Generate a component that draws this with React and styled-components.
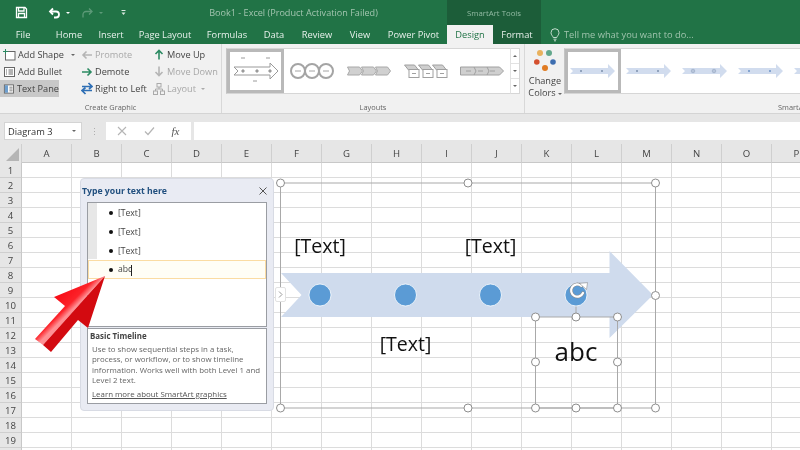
import React from 'react';
import styled, { createGlobalStyle } from 'styled-components';

const GlobalStyle = createGlobalStyle`
  html, body { margin: 0; padding: 0; background: #fff; }
  body { font-family: "Open Sans", "Noto Sans", sans-serif; color: #444; }
`;

const Page = styled.div`
  position: relative;
  width: 800px;
  height: 450px;
  overflow: hidden;
  display: flex;
  flex-direction: column;
  background: #fff;
  filter: blur(0.3px);
`;

const Header = styled.header`
  position: relative;
  height: 44px;
  background: #217346;
  display: flex;
  flex-direction: column;
  flex: none;
`;

const TitleRow = styled.div`
  position: relative;
  height: 25px;
  display: flex;
  align-items: center;
`;

const QuickIcon = styled.span`
  width: ${(p) => p.$w}px;
  height: 25px;
  padding-left: ${(p) => p.$pl || 0}px;
  box-sizing: border-box;
  display: flex;
  align-items: center;
  justify-content: center;
  flex: none;
`;

const BookTitle = styled.div`
  width: 303px;
  flex: none;
  text-align: center;
  font-size: 9.1px;
  color: #a3c5b0;
  white-space: nowrap;
`;

const ToolsTab = styled.div`
  width: 94px;
  height: 25px;
  margin-left: 2px;
  color: #93bba4;
  font-size: 7.8px;
  display: flex;
  align-items: center;
  justify-content: center;
  flex: none;
`;

const ToolsShade = styled.div`
  position: absolute;
  left: 447px;
  top: 0;
  width: 94px;
  height: 44px;
  background: #1c5d39;
`;

const TabRow = styled.nav`
  position: relative;
  height: 19px;
  display: flex;
  align-items: stretch;
`;

const Tab = styled.div`
  width: ${(p) => p.$w}px;
  flex: none;
  display: flex;
  align-items: center;
  justify-content: center;
  font-size: 9.3px;
  white-space: nowrap;
  color: ${(p) => (p.$active ? '#217346' : '#e8f1ec')};
  background: ${(p) => (p.$active ? '#f1f1f1' : 'transparent')};
`;

const TellMe = styled.div`
  margin-left: 9px;
  display: flex;
  align-items: center;
  gap: 4px;
  font-size: 9.3px;
  color: #9fc4ad;
  white-space: nowrap;
`;

const Ribbon = styled.section`
  height: 69px;
  flex: none;
  display: flex;
  background: #f1f1f1;
  border-bottom: 1px solid #d4d4d4;
`;

const Group = styled.div`
  position: relative;
  width: ${(p) => p.$w}px;
  flex: none;
  padding-top: ${(p) => p.$top || 0}px;
  box-sizing: border-box;
  border-right: ${(p) => (p.$sep ? '1px solid #d8d8d8' : 'none')};
  display: flex;
  flex-direction: column;
`;

const GroupBody = styled.div`
  height: ${(p) => p.$h || 46}px;
  display: flex;
  align-items: flex-start;
  flex: none;
`;

const GroupLabel = styled.div`
  height: 10px;
  margin-top: auto;
  margin-bottom: 1px;
  display: flex;
  align-items: center;
  justify-content: ${(p) => p.$align || 'center'};
  padding-left: ${(p) => p.$pad || 0}px;
  font-size: 7.4px;
  color: #666;
  white-space: nowrap;
`;

const CommandColumn = styled.div`
  width: ${(p) => p.$w}px;
  flex: none;
  display: flex;
  flex-direction: column;
`;

const Command = styled.div`
  height: 17px;
  width: ${(p) => p.$fill || 'auto'};
  display: flex;
  align-items: center;
  gap: 2px;
  padding-left: 3px;
  box-sizing: border-box;
  font-size: 9.2px;
  white-space: nowrap;
  color: ${(p) => (p.$off ? '#a8a8a8' : '#444')};
  background: ${(p) => (p.$on ? '#c8c8c8' : 'transparent')};
`;

const Caret = styled.span`
  display: inline-block;
  width: 0;
  height: 0;
  margin-left: ${(p) => p.$gap ?? 3}px;
  vertical-align: middle;
  border-left: 2px solid transparent;
  border-right: 2px solid transparent;
  border-top: ${(p) => (p.$up ? 'none' : `2px solid ${p.$color || '#666'}`)};
  border-bottom: ${(p) => (p.$up ? `2px solid ${p.$color || '#666'}` : 'none')};
`;

const Gallery = styled.div`
  margin-left: ${(p) => p.$ml || 0}px;
  width: ${(p) => p.$w}px;
  height: 46px;
  background: #fff;
  border: 1px solid #d6d6d6;
  border-left-color: #c4c4c4;
  border-right: ${(p) => (p.$open ? 'none' : '1px solid #d6d6d6')};
  box-sizing: border-box;
  display: flex;
  align-items: center;
  flex: none;
  overflow: hidden;
`;

const Tile = styled.div`
  width: ${(p) => p.$w}px;
  height: 44px;
  flex: none;
  box-sizing: border-box;
  border: ${(p) => (p.$selected ? '3px solid #b9b9b9' : 'none')};
  display: flex;
  align-items: center;
  justify-content: center;
`;

const ScrollStack = styled.div`
  width: 10px;
  height: 46px;
  flex: none;
  display: flex;
  flex-direction: column;
  background: #fff;
  border: 1px solid #d6d6d6;
  border-left: 1px solid #e2e2e2;
  box-sizing: border-box;
`;

const ScrollButton = styled.div`
  flex: 1;
  display: flex;
  align-items: center;
  justify-content: center;
  border-bottom: ${(p) => (p.$last ? 'none' : '1px solid #e2e2e2')};
`;

const BigButton = styled.div`
  width: 38px;
  margin-left: 1px;
  flex: none;
  display: flex;
  flex-direction: column;
  align-items: center;
  font-size: 9.2px;
  line-height: 12px;
  color: #444;
  text-align: center;
`;

const DotsWrap = styled.div`
  height: 27px;
  flex: none;
`;

const Band = styled.div`
  height: 8px;
  background: #e6e6e6;
  flex: none;
`;

const FormulaBar = styled.div`
  height: 20px;
  flex: none;
  display: flex;
  align-items: flex-start;
  background: #e6e6e6;
`;

const NameBox = styled.div`
  width: 78px;
  height: 18px;
  margin-left: 4px;
  background: #fff;
  border: 1px solid #d4d4d4;
  box-sizing: border-box;
  display: flex;
  align-items: center;
  justify-content: space-between;
  padding: 0 5px 0 3px;
  font-size: 9.3px;
  color: #333;
  flex: none;
`;

const Grip = styled.div`
  width: 24px;
  height: 18px;
  flex: none;
  display: flex;
  align-items: center;
  justify-content: center;
  color: #aaa;
  font-size: 9px;
`;

const FxBox = styled.div`
  width: 85px;
  height: 18px;
  background: #fff;
  flex: none;
  display: flex;
  align-items: center;
  justify-content: space-around;
  padding: 0 3px 0 2px;
  box-sizing: border-box;
`;

const FxLabel = styled.span`
  font-family: "Liberation Serif", serif;
  font-style: italic;
  font-size: 11px;
  color: #555;
`;

const FormulaInput = styled.div`
  flex: 1;
  height: 18px;
  margin-left: 3px;
  background: #fff;
`;

const Sheet = styled.div`
  padding-top: 2px;
  background: #e6e6e6;
  flex: 1;
  display: grid;
  grid-template-columns: 22px repeat(16, 50px);
  grid-template-rows: 19px repeat(20, 15px);
  overflow: hidden;
`;

const Corner = styled.div`
  display: flex;
  align-items: flex-end;
  justify-content: flex-end;
  padding: 0 2px 2px 0;
  background: #e6e6e6;
  border-right: 1px solid #cfcfcf;
`;

const ColHead = styled.div`
  display: flex;
  align-items: center;
  justify-content: center;
  font-size: 9.6px;
  color: #444;
  background: #e6e6e6;
  border-right: 1px solid #cfcfcf;
  border-bottom: 1px solid #c8c8c8;
`;

const RowHead = styled.div`
  display: flex;
  align-items: center;
  justify-content: center;
  font-size: 9.6px;
  color: #444;
  background: #e6e6e6;
  border-right: 1px solid #c8c8c8;
  border-bottom: 1px solid #cfcfcf;
`;

const Cell = styled.div`
  background: #fff;
  border-right: 1px solid #dcdcdc;
  border-bottom: 1px solid #dcdcdc;
`;

const DiagramLayer = styled.svg`
  position: absolute;
  left: 0;
  top: 0;
  width: 800px;
  height: 450px;
  pointer-events: none;
`;

const NodeText = styled.div`
  position: absolute;
  left: ${(p) => p.$x}px;
  top: ${(p) => p.$y}px;
  transform: translate(-50%, -50%);
  font-size: ${(p) => p.$size || 19.5}px;
  color: #111;
  white-space: nowrap;
`;

const Pane = styled.aside`
  position: absolute;
  left: 80px;
  top: 178px;
  width: 194px;
  height: 233px;
  box-sizing: border-box;
  padding: 0 6px 6px;
  background: #e9ebf3;
  border: 1px solid #d8dbe4;
  border-radius: 4px;
  display: flex;
  flex-direction: column;
`;

const PaneTitleRow = styled.div`
  height: 23px;
  flex: none;
  margin-left: -5px;
  display: flex;
  align-items: center;
  justify-content: space-between;
`;

const PaneTitle = styled.div`
  font-size: 8.7px;
  font-weight: 700;
  color: #22507f;
  white-space: nowrap;
`;

const OutlineBox = styled.div`
  height: 125px;
  flex: none;
  background: #fff;
  border: 1px solid #9a9da3;
  box-sizing: border-box;
  position: relative;
  display: flex;
  flex-direction: column;
`;

const Gutter = styled.div`
  position: absolute;
  left: 0;
  top: 0;
  width: 9px;
  height: 56px;
  background: #e7e7e7;
`;

const Bullet = styled.div`
  position: relative;
  height: 19px;
  box-sizing: border-box;
  padding-left: 21px;
  display: flex;
  align-items: center;
  gap: 5px;
  font-size: 8.6px;
  color: #444;
  background: ${(p) => (p.$active ? '#fffef6' : 'transparent')};
  box-shadow: ${(p) => (p.$active ? 'inset 0 0 0 1px #fbdca3' : 'none')};
  &::before {
    content: "";
    width: 4px;
    height: 4px;
    border-radius: 50%;
    background: #111;
  }
`;

const Cursor = styled.span`
  display: inline-block;
  width: 1px;
  height: 11px;
  margin-left: -1px;
  vertical-align: middle;
  background: #222;
`;

const InfoBox = styled.div`
  margin-top: 1px;
  flex: 1;
  background: #fff;
  border: 1px solid #9a9da3;
  box-sizing: border-box;
  padding: 2px 2px 0 3px;
  font-size: 7.9px;
  line-height: 10.6px;
  color: #666;
`;

const InfoTitle = styled.div`
  font-weight: 700;
  color: #444;
  margin-bottom: 2px;
  margin-left: -1px;
`;

const InfoText = styled.div`
  padding-left: 1px;
  white-space: nowrap;
`;

const LearnLink = styled.div`
  padding-left: 1px;
  margin-top: 3px;
  color: #555;
  text-decoration: underline;
  white-space: nowrap;
`;

const Expander = styled.div`
  position: absolute;
  left: 275px;
  top: 287px;
  width: 11px;
  height: 15px;
  background: #fff;
  border: 1px solid #e2e2e2;
  border-radius: 2px;
  box-sizing: border-box;
  display: flex;
  align-items: center;
  justify-content: center;
`;

const Save = () => (
  <svg width="13" height="13" viewBox="0 0 13 13" fill="none" stroke="#fff" strokeWidth="1.3">
    <path d="M1.5 1.5h8.5l1.5 1.5v8.5h-10z" />
    <path d="M3.5 1.5v3.5h5.5v-3.5M3.5 11.5v-4h6v4" />
  </svg>
);

const Undo = () => (
  <svg width="13" height="12" viewBox="0 0 13 12" fill="none" stroke="#fff" strokeWidth="1.8">
    <path d="M5 1.5 2 4.5l3 3" />
    <path d="M2.5 4.5h5.5a3 3 0 0 1 0 6H6" />
  </svg>
);

const Redo = () => (
  <svg width="13" height="12" viewBox="0 0 13 12" fill="none" stroke="#5d9a78" strokeWidth="1.3">
    <path d="M8 1.5l3 3-3 3" />
    <path d="M10.5 4.5H5a3 3 0 0 0-3 3v3" />
  </svg>
);

const CustomizeIcon = () => (
  <svg width="5" height="6" viewBox="0 0 5 6">
    <path d="M.5 .5h4" stroke="#dbe8e0" fill="none" />
    <path d="M.5 2.5h4L2.5 5z" fill="#dbe8e0" />
  </svg>
);

const Bulb = () => (
  <svg width="10" height="14" viewBox="0 0 10 14" fill="none" stroke="#c3dccd" strokeWidth="1">
    <path d="M3.2 9.5C2.8 7.8 1 7 1 4.7a4 4 0 0 1 8 0C9 7 7.2 7.8 6.8 9.5z" />
    <path d="M3.5 11.2h3M4 12.8h2" />
  </svg>
);

const AddShapeIcon = () => (
  <svg width="13" height="12" viewBox="0 0 13 12" fill="none">
    <rect x="2.5" y="2.5" width="9.5" height="8.5" fill="#fff" stroke="#666" />
    <path d="M2.5 0v5M0 2.5h5" stroke="#2b8a62" strokeWidth="1" />
  </svg>
);

const BulletIcon = () => (
  <svg width="13" height="12" viewBox="0 0 13 12" fill="none" stroke="#666">
    <rect x="1.5" y="1.5" width="10" height="9" fill="#fff" />
    <path d="M3 4h1M5.5 4h4.5M3 6h1M5.5 6h4.5M3 8h1M5.5 8h4.5" />
  </svg>
);

const PaneIcon = () => (
  <svg width="13" height="12" viewBox="0 0 13 12" fill="none">
    <rect x="1.5" y="1.5" width="10" height="9" fill="#fff" stroke="#666" />
    <rect x="2" y="2" width="3.5" height="8" fill="#3e7fbf" opacity="0.75" />
    <path d="M7 4h3.5M7 6h3.5M7 8h3.5" stroke="#777" />
  </svg>
);

const HArrow = ({ dir, color }) => (
  <svg width="12" height="10" viewBox="0 0 12 10" fill="none" stroke={color} strokeWidth="1.6">
    {dir === 'left' ? <path d="M11 5H2M5.5 1.5 2 5l3.5 3.5" /> : <path d="M1 5h9M6.5 1.5 10 5 6.5 8.5" />}
  </svg>
);

const VArrow = ({ dir, color }) => (
  <svg width="12" height="11" viewBox="0 0 12 11" fill="none" stroke={color} strokeWidth="1.6">
    {dir === 'up' ? <path d="M6 10.5V2M2.5 5 6 1.5 9.5 5" /> : <path d="M6 .5V9M2.5 6 6 9.5 9.5 6" />}
  </svg>
);

const SwapIcon = () => (
  <svg width="12" height="13" viewBox="0 0 12 13" fill="none" stroke="#2f6fb5" strokeWidth="1.7">
    <path d="M1 4.5h9M7.5 1 11 4.5 8 7" />
    <path d="M11 8.5H2M4.5 5.5 1 8.5 4.5 12" />
  </svg>
);

const LayoutIcon = () => (
  <svg width="12" height="12" viewBox="0 0 12 12" fill="none" stroke="#aaa">
    <rect x="4" y=".5" width="4" height="3.5" />
    <rect x=".5" y="8" width="4" height="3.5" />
    <rect x="7.5" y="8" width="4" height="3.5" />
    <path d="M6 4v2H2.5v2M6 6h3.5v2" />
  </svg>
);

const ArrowThumb = () => (
  <svg width="46" height="36" viewBox="0 0 46 36" fill="none" stroke="#9a9a9a">
    <path d="M1 14h36v-4l8 8-8 8v-4H1l4-4z" />
    <circle cx="10" cy="18" r="1.2" fill="#999" />
    <circle cx="24" cy="18" r="1.2" fill="#999" />
    <circle cx="37" cy="18" r="1.2" fill="#999" />
    <path d="M8 5h4M33 5h4M20 28h4" />
  </svg>
);

const RingsThumb = () => (
  <svg width="44" height="18" viewBox="0 0 44 18" fill="#fff" stroke="#a4a4a4" strokeWidth="2">
    {[8, 22, 36].map((x) => (
      <g key={x}>
        <circle cx={x} cy="9" r="7" />
        <path d={`M${x - 3} 9h6`} strokeWidth="1" />
      </g>
    ))}
  </svg>
);

const ChevronThumb = () => (
  <svg width="44" height="10" viewBox="0 0 44 10" fill="#d0d0d0" stroke="#a8a8a8">
    <path d="M.5 1h12l3 4-3 4H.5l2-4z" />
    <path d="M14.5 1h12l3 4-3 4h-12l2-4z" />
    <path d="M28.5 1h12l3 4-3 4h-12l2-4z" />
  </svg>
);

const FolderThumb = () => (
  <svg width="44" height="14" viewBox="0 0 44 14" fill="#fff" stroke="#a0a0a0">
    {[0, 14, 28].map((x) => (
      <g key={x}>
        <path d={`M${x + .5} 1h10l4 5h-10z`} fill="#cfcfcf" />
        <rect x={x + 5} y="5.5" width="10" height="8" />
        <path d={`M${x + 8} 9.5h4`} />
      </g>
    ))}
  </svg>
);

const PentagonThumb = () => (
  <svg width="44" height="10" viewBox="0 0 44 10" fill="#cfcfcf" stroke="#a0a0a0">
    <path d="M.5 1h39l4 4-4 4H.5z" />
    <path d="M6 5h5M18 5h5M30 5h5M14 1l2 4-2 4M27 1l2 4-2 4" fill="none" />
  </svg>
);

const StyleThumb = ({ ring, dark }) => (
  <svg width="46" height="14" viewBox="0 0 46 14">
    <path d="M0 4h38V0l7 7-7 7v-4H0l3-3z" fill="#d1dcee" />
    {[11, 32].map((x) => (
      <circle
        key={x}
        cx={x}
        cy="7"
        r={ring ? 1.8 : 1}
        fill={dark ? '#6d93c6' : ring ? '#b6c4da' : '#7b90ad'}
        stroke={ring ? '#8a9db8' : 'none'}
        strokeWidth=".5"
      />
    ))}
  </svg>
);

const ColorDots = () => (
  <svg width="22" height="23" viewBox="0 0 22 23">
    <circle cx="6" cy="5" r="3" fill="#e9b15d" />
    <circle cx="15" cy="5" r="3" fill="#62a78c" />
    <circle cx="2.8" cy="14" r="2.8" fill="#d4502e" />
    <circle cx="19" cy="14" r="2.8" fill="#3d6eb0" />
    <circle cx="11" cy="20" r="3" fill="#e07b22" />
  </svg>
);

const RedArrow = () => (
  <DiagramLayer viewBox="0 0 800 450">
    <defs>
      <linearGradient id="redFace" gradientUnits="userSpaceOnUse" x1="58" y1="296" x2="72" y2="310">
        <stop offset="0" stopColor="#f80e18" />
        <stop offset="0.7" stopColor="#fc2229" />
        <stop offset="1" stopColor="#ff9094" />
      </linearGradient>
    </defs>
    <path d="M105 276 54 297 65 306 35 339 43 345Z" fill="url(#redFace)" />
    <path d="M105 276 43 345 51 352 78 320 88 328Z" fill="#d30a10" />
  </DiagramLayer>
);

const Handle = ({ x, y }) => <circle cx={x} cy={y} r="4" fill="#fff" stroke="#8e8e8e" strokeWidth="1" />;

const RotateHandle = () => (
  <g fill="none" strokeLinecap="round">
    <path d="M583 293a6.2 6.2 0 1 1-1.6-7.2" stroke="#8c8c8c" strokeWidth="3.4" />
    <path d="M583 293a6.2 6.2 0 1 1-1.6-7.2" stroke="#fff" strokeWidth="2.2" />
    <path d="M579.5 283.5 586.5 289.5 587.5 283Z" fill="#fff" stroke="#8c8c8c" strokeWidth="0.6" strokeLinejoin="round" />
  </g>
);

const Diagram = () => (
  <DiagramLayer viewBox="0 0 800 450">
    <path d="M281 273H609.5V251L653 295 609.5 338V317H281L301.5 295Z" fill="#cfdbed" />
    <rect x="280.5" y="183" width="375" height="225" fill="none" stroke="#a9a9a9" />
    <rect x="535.5" y="317" width="82" height="91" fill="none" stroke="#a9a9a9" />
    <path d="M576 306V317" stroke="#a9a9a9" />
    {[320, 405.5, 490.5, 576].map((x) => (
      <circle key={x} cx={x} cy="295" r="11" fill="#5b9bd5" stroke="#fff" strokeWidth="0.8" />
    ))}
    <RotateHandle />
    {[
      [280.5, 183], [468, 183], [655.5, 183], [655.5, 295.5],
      [280.5, 408], [468, 408], [655.5, 408],
      [535.5, 317], [576, 317], [617.5, 317],
      [535.5, 362], [617.5, 362],
      [535.5, 408], [576, 408], [617.5, 408],
    ].map(([x, y]) => (
      <Handle key={`${x}-${y}`} x={x} y={y} />
    ))}
  </DiagramLayer>
);

const columns = 'ABCDEFGHIJKLMNOP'.split('');
const rows = Array.from({ length: 20 }, (_, i) => i + 1);

const tabs = [
  ['File', 46], ['Home', 46], ['Insert', 38], ['Page Layout', 70], ['Formulas', 54],
  ['Data', 40], ['Review', 46], ['View', 40], ['Power Pivot', 67],
];

export default function App() {
  return (
    <Page>
      <GlobalStyle />
      <Header>
        <ToolsShade />
        <TitleRow>
          <QuickIcon $w={42}><Save /></QuickIcon>
          <QuickIcon $w={24}><Undo /></QuickIcon>
          <QuickIcon $w={4}><Caret $gap={0} $color="#fff" /></QuickIcon>
          <QuickIcon $w={28} $pl={7}><Redo /></QuickIcon>
          <QuickIcon $w={6}><Caret $gap={0} $color="#5d9a78" /></QuickIcon>
          <QuickIcon $w={38}><CustomizeIcon /></QuickIcon>
          <BookTitle>Book1 - Excel (Product Activation Failed)</BookTitle>
          <ToolsTab>SmartArt Tools</ToolsTab>
        </TitleRow>
        <TabRow>
          {tabs.map(([name, w]) => (
            <Tab key={name} $w={w}>{name}</Tab>
          ))}
          <Tab $w={46} $active>Design</Tab>
          <Tab $w={48}>Format</Tab>
          <TellMe><Bulb />Tell me what you want to do...</TellMe>
        </TabRow>
      </Header>

      <Ribbon>
        <Group $w={222} $top={2} $sep>
          <GroupBody $h={52}>
            <CommandColumn $w={78}>
              <Command>
                <AddShapeIcon />Add Shape<Caret $gap={5} />
              </Command>
              <Command><BulletIcon />Add Bullet</Command>
              <Command $on $fill="59px"><PaneIcon />Text Pane</Command>
            </CommandColumn>
            <CommandColumn $w={72}>
              <Command $off><HArrow dir="left" color="#b5b5b5" />Promote</Command>
              <Command><HArrow dir="right" color="#2b8a62" />Demote</Command>
              <Command><SwapIcon />Right to Left</Command>
            </CommandColumn>
            <CommandColumn $w={70}>
              <Command><VArrow dir="up" color="#2b8a62" />Move Up</Command>
              <Command $off><VArrow dir="down" color="#b5b5b5" />Move Down</Command>
              <Command $off><LayoutIcon />Layout<Caret $color="#aaa" /></Command>
            </CommandColumn>
          </GroupBody>
          <GroupLabel>Create Graphic</GroupLabel>
        </Group>

        <Group $w={303} $top={4} $sep>
          <GroupBody>
            <Gallery $w={284} $ml={4} $open>
              <Tile $w={57} $selected><ArrowThumb /></Tile>
              <Tile $w={56}><RingsThumb /></Tile>
              <Tile $w={57}><ChevronThumb /></Tile>
              <Tile $w={57}><FolderThumb /></Tile>
              <Tile $w={56}><PentagonThumb /></Tile>
            </Gallery>
            <ScrollStack>
              <ScrollButton><Caret $gap={0} $up /></ScrollButton>
              <ScrollButton><Caret $gap={0} /></ScrollButton>
              <ScrollButton $last><Caret $gap={0} /></ScrollButton>
            </ScrollStack>
          </GroupBody>
          <GroupLabel>Layouts</GroupLabel>
        </Group>

        <Group $w={275} $top={4}>
          <GroupBody>
            <BigButton>
              <DotsWrap><ColorDots /></DotsWrap>
              <span>Change</span>
              <span>Colors<Caret $gap={2} /></span>
            </BigButton>
            <Gallery $w={236} $open>
              <Tile $w={56} $selected><StyleThumb /></Tile>
              <Tile $w={56}><StyleThumb /></Tile>
              <Tile $w={56}><StyleThumb ring /></Tile>
              <Tile $w={56}><StyleThumb dark /></Tile>
              <Tile $w={56}><StyleThumb /></Tile>
            </Gallery>
          </GroupBody>
          <GroupLabel $align="flex-start" $pad={253}>SmartArt Styles</GroupLabel>
        </Group>
      </Ribbon>

      <Band />

      <FormulaBar>
        <NameBox>Diagram 3<Caret /></NameBox>
        <Grip>⋮</Grip>
        <FxBox>
          <svg width="10" height="10" viewBox="0 0 10 10" stroke="#b5b5b5" strokeWidth="1.1"><path d="M1 1l8 8M9 1 1 9" /></svg>
          <svg width="11" height="10" viewBox="0 0 11 10" fill="none" stroke="#b5b5b5" strokeWidth="1.2"><path d="M1 5.5 4 8.5 10 1.5" /></svg>
          <FxLabel>fx</FxLabel>
        </FxBox>
        <FormulaInput />
      </FormulaBar>

      <Sheet>
        <Corner>
          <svg width="13" height="13" viewBox="0 0 13 13"><path d="M13 0V13H0Z" fill="#b5b5b5" /></svg>
        </Corner>
        {columns.map((c) => (
          <ColHead key={c}>{c}</ColHead>
        ))}
        {rows.map((r) => (
          <React.Fragment key={r}>
            <RowHead>{r < 20 ? r : ''}</RowHead>
            {columns.map((c) => (
              <Cell key={c} />
            ))}
          </React.Fragment>
        ))}
      </Sheet>

      <Diagram />
      <NodeText $x={320} $y={245}>[Text]</NodeText>
      <NodeText $x={490.5} $y={245}>[Text]</NodeText>
      <NodeText $x={405.5} $y={343}>[Text]</NodeText>
      <NodeText $x={576} $y={351} $size={26}>abc</NodeText>
      <Expander>
        <svg width="5" height="7" viewBox="0 0 5 7" fill="none" stroke="#999"><path d="M1 .5 4 3.5 1 6.5" /></svg>
      </Expander>

      <Pane>
        <PaneTitleRow>
          <PaneTitle>Type your text here</PaneTitle>
          <svg width="8" height="8" viewBox="0 0 8 8" stroke="#555" strokeWidth="1"><path d="M.5.5l7 7M7.5.5l-7 7" /></svg>
        </PaneTitleRow>
        <OutlineBox>
          <Gutter />
          <Bullet>[Text]</Bullet>
          <Bullet>[Text]</Bullet>
          <Bullet>[Text]</Bullet>
          <Bullet $active>
            <span>abc<Cursor /></span>
          </Bullet>
        </OutlineBox>
        <InfoBox>
          <InfoTitle>Basic Timeline</InfoTitle>
          <InfoText>Use to show sequential steps in a task,</InfoText>
          <InfoText>process, or workflow, or to show timeline</InfoText>
          <InfoText>information. Works well with both Level 1 and</InfoText>
          <InfoText>Level 2 text.</InfoText>
          <LearnLink>Learn more about SmartArt graphics</LearnLink>
        </InfoBox>
      </Pane>

      <RedArrow />
    </Page>
  );
}
